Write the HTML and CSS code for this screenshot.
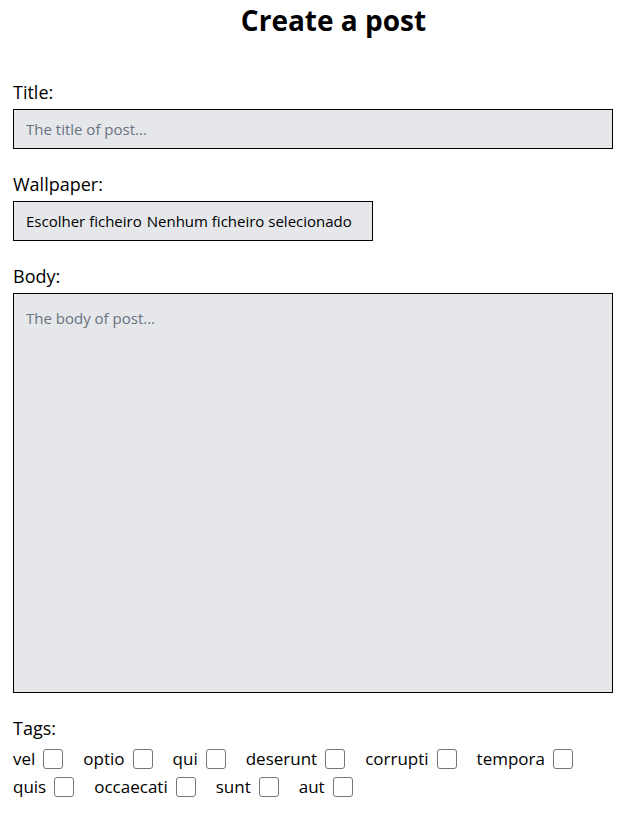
FILE: index.html
```html
<!DOCTYPE html>
<html lang="pt">
<head>
<meta charset="utf-8">
<title>Create a post</title>
<link rel="stylesheet" href="styles.css">
</head>
<body>
<main class="page">
  <h1 class="heading">Create a post</h1>
  <form class="form">
    <div class="field">
      <label class="label" for="title">Title:</label>
      <input class="input" id="title" type="text" placeholder="The title of post...">
    </div>
    <div class="field">
      <span class="label">Wallpaper:</span>
      <label class="file">
        <input class="file-native" type="file">
        <span class="file-btn">Escolher ficheiro</span>
        <span class="file-name">Nenhum ficheiro selecionado</span>
      </label>
    </div>
    <div class="field">
      <label class="label" for="body">Body:</label>
      <textarea class="textarea" id="body" placeholder="The body of post..."></textarea>
    </div>
    <div class="field">
      <span class="label">Tags:</span>
      <div class="tags">
        <label class="tag">vel <input class="check" type="checkbox"></label>
        <label class="tag">optio <input class="check" type="checkbox"></label>
        <label class="tag">qui <input class="check" type="checkbox"></label>
        <label class="tag">deserunt <input class="check" type="checkbox"></label>
        <label class="tag">corrupti <input class="check" type="checkbox"></label>
        <label class="tag">tempora <input class="check" type="checkbox"></label>
        <label class="tag">quis <input class="check" type="checkbox"></label>
        <label class="tag">occaecati <input class="check" type="checkbox"></label>
        <label class="tag">sunt <input class="check" type="checkbox"></label>
        <label class="tag">aut <input class="check" type="checkbox"></label>
      </div>
    </div>
  </form>
</main>
</body>
</html>
```
FILE: styles.css
```css
* { box-sizing: border-box; }
html, body { margin: 0; padding: 0; background: #fff; }
body {
  font-family: "Open Sans", "Noto Sans", "DejaVu Sans", sans-serif;
  color: #000;
}
.page {
  width: 625px;
  padding: 0 13px;
}
.heading {
  margin: 0;
  padding-top: 2px;
  padding-left: 42px;
  font-size: 28px;
  line-height: 36px;
  font-weight: 700;
  text-align: center;
}
.form {
  display: flex;
  flex-direction: column;
  gap: 24px;
  margin-top: 43px;
}
.field {
  display: flex;
  flex-direction: column;
}
.label {
  font-size: 18px;
  line-height: 22px;
  padding-bottom: 6px;
  display: block;
}
.input, .textarea, .file {
  display: block;
  width: 600px;
  border: 1px solid #000;
  background: #e5e7eb;
  font-family: inherit;
  font-size: 15px;
  color: #000;
  border-radius: 0;
  outline: none;
  margin: 0;
}
.input {
  height: 40px;
  padding: 0 12px;
}
.textarea {
  height: 400px;
  padding: 12px;
  resize: none;
  line-height: 24px;
}
.input::placeholder, .textarea::placeholder { color: #6b7280; opacity: 1; }
.file {
  width: 360px;
  height: 40px;
  padding: 0 12px;
  display: flex;
  align-items: center;
  gap: 5px;
  white-space: nowrap;
}
.file-native { display: none; }
.tags {
  display: flex;
  flex-wrap: wrap;
  column-gap: 20px;
  row-gap: 8px;
  margin-top: 4px;
}
.tag {
  display: flex;
  align-items: center;
  gap: 8px;
  font-size: 17px;
  line-height: 20px;
}
.check {
  appearance: none;
  -webkit-appearance: none;
  width: 20px;
  height: 20px;
  margin: 0;
  border: 1px solid #767676;
  border-radius: 3px;
  background: #fff;
}
```
